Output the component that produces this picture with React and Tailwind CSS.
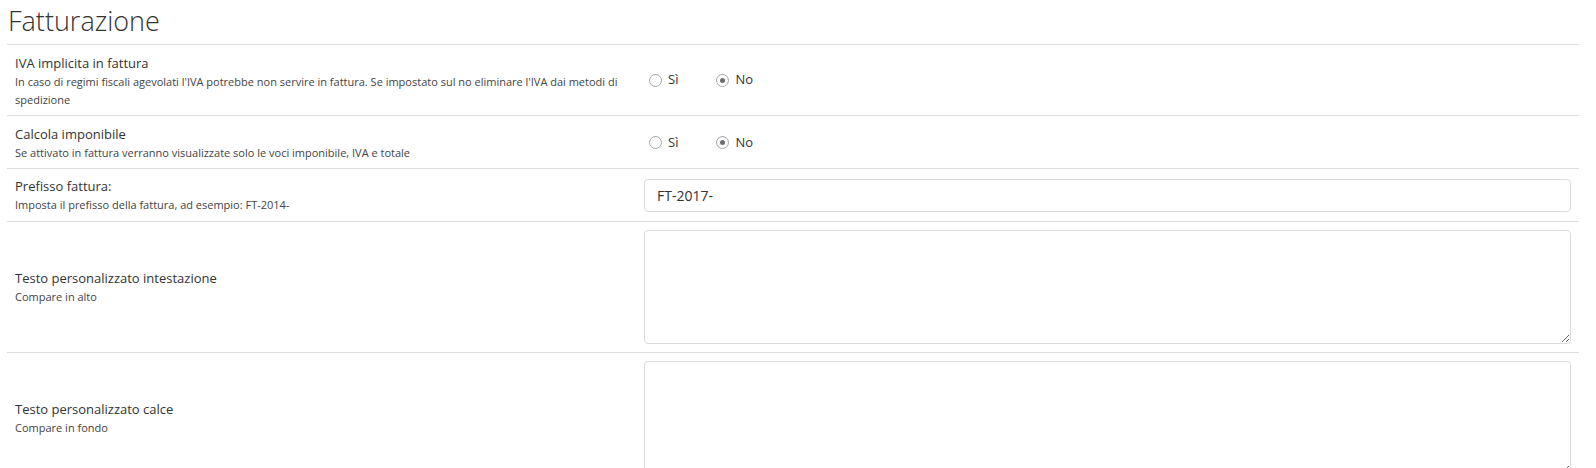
import { useState } from 'react';

function Radio({ label, checked, onClick }) {
  return (
    <label className="flex items-center cursor-pointer" onClick={onClick}>
      <span className="w-[13px] h-[13px] rounded-full border border-[#a6a6a6] bg-white flex items-center justify-center">
        {checked && <span className="w-[5px] h-[5px] rounded-full bg-[#6f6f6f]" />}
      </span>
      <span className="ml-[6px] text-[13px] text-[#333]">{label}</span>
    </label>
  );
}

function YesNo({ initial }) {
  const [value, setValue] = useState(initial);
  return (
    <div className="flex items-center pl-[5px] gap-[38px]">
      <Radio label="Sì" checked={value === 'si'} onClick={() => setValue('si')} />
      <Radio label="No" checked={value === 'no'} onClick={() => setValue('no')} />
    </div>
  );
}

function Row({ title, desc, children, className = '' }) {
  return (
    <div className={`flex items-center border-b border-[#dedede] ${className}`}>
      <div className="w-[637px] shrink-0 pl-[8px] pr-[14px]">
        <div className="text-[13px] leading-[20px] text-[#333]">{title}</div>
        <div className="text-[11px] leading-[18px] text-[#444]">{desc}</div>
      </div>
      <div className="flex-1 pr-[8px]">{children}</div>
    </div>
  );
}

export default function App() {
  return (
    <div className="bg-white min-h-[468px] pl-[7px] pr-[17px] font-['Open_Sans',sans-serif] overflow-hidden">
      <div className="h-[45px] border-b border-[#dedede] flex items-center">
        <h1 className="pl-[1px] text-[27px] font-light text-[#333] leading-none -mt-[3px]">Fatturazione</h1>
      </div>

      <Row
        title="IVA implicita in fattura"
        desc="In caso di regimi fiscali agevolati l'IVA potrebbe non servire in fattura. Se impostato sul no eliminare l'IVA dai metodi di spedizione"
        className="pt-[8px] pb-[6px]"
      >
        <div className="-mt-[2px]">
          <YesNo initial="no" />
        </div>
      </Row>

      <Row
        title="Calcola imponibile"
        desc="Se attivato in fattura verranno visualizzate solo le voci imponibile, IVA e totale"
        className="pt-[8px] pb-[6px]"
      >
        <div className="-mt-[1px]">
          <YesNo initial="no" />
        </div>
      </Row>

      <Row
        title="Prefisso fattura:"
        desc="Imposta il prefisso della fattura, ad esempio: FT-2014-"
        className="py-[7px]"
      >
        <input
          defaultValue="FT-2017-"
          className="w-full h-[33px] border border-[#dcdcdc] rounded-[4px] px-[12px] text-[14px] text-[#333] outline-none"
        />
      </Row>

      <Row title="Testo personalizzato intestazione" desc="Compare in alto" className="py-[8px]">
        <textarea className="block w-full h-[114px] border border-[#dcdcdc] rounded-[4px] px-[12px] py-[6px] text-[14px] outline-none" />
      </Row>

      <Row title="Testo personalizzato calce" desc="Compare in fondo" className="py-[8px]">
        <textarea className="block w-full h-[114px] border border-[#dcdcdc] rounded-[4px] px-[12px] py-[6px] text-[14px] outline-none" />
      </Row>
    </div>
  );
}
